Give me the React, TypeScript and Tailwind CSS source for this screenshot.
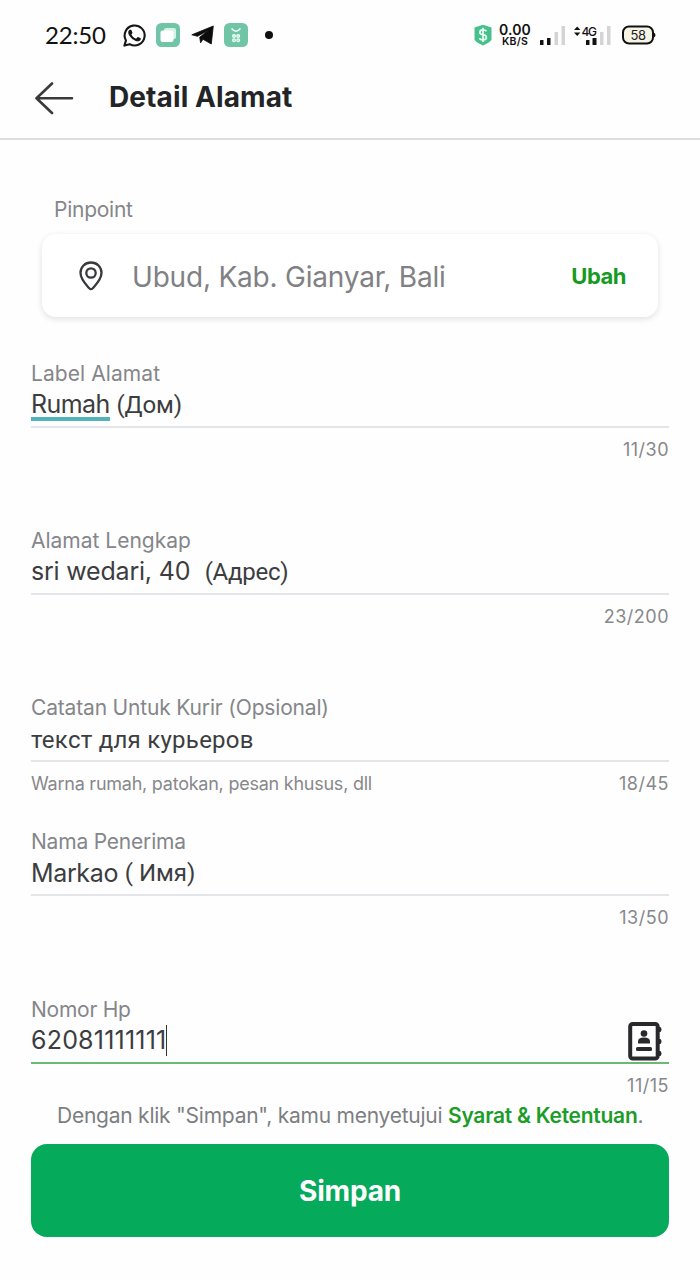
import React from "react";

type FieldProps = {
    label: string;
    labelClass?: string;
    count: string;
    helper?: string;
    active?: boolean;
    className: string;
    children: React.ReactNode;
};

function Field({ label, labelClass = "", count, helper, active, className, children }: FieldProps) {
    return (
        <div className={`relative flex flex-col ${className}`}>
            <label className="h-[30px] pt-px text-[21px] leading-[30px] text-[#85868a] whitespace-pre">
                <span className={labelClass}>{label}</span>
            </label>
            <div className="flex items-center h-8 text-[25px] leading-8 text-[#3c3d40] whitespace-pre">{children}</div>
            <div className={`mt-1.5 h-[2px] shrink-0 ${active ? "bg-[#6cb877]" : "bg-[#e3e5e9]"}`} />
            <div className="mt-2 flex justify-between h-7 text-[18px] leading-7 text-[#87888c]">
                <span className="tracking-[-0.24px]">{helper}</span>
                <span className="tracking-[0.5px]">{count}</span>
            </div>
        </div>
    );
}

function StatusBar() {
    return (
        <div className="h-[68px] flex items-start justify-between pl-[45px] pr-[44px] text-[#111]">
            <div className="h-[70px] flex items-center">
                <span className="w-[62px] font-['Lato'] text-[24px] tracking-[-0.2px] whitespace-nowrap">22:50</span>
                {/* WhatsApp */}
                <svg className="ml-[15px]" width="25" height="25" viewBox="0 0 24 24" fill="#161616">
                    <path d="M17.472 14.382c-.297-.149-1.758-.867-2.03-.967-.273-.099-.471-.148-.67.15-.197.297-.767.966-.94 1.164-.173.199-.347.223-.644.075-.297-.15-1.255-.463-2.39-1.475-.883-.788-1.48-1.761-1.653-2.059-.173-.297-.018-.458.13-.606.134-.133.298-.347.446-.52.149-.174.198-.298.298-.497.099-.198.05-.371-.025-.52-.075-.149-.669-1.612-.916-2.207-.242-.579-.487-.5-.669-.51-.173-.008-.371-.01-.57-.01-.198 0-.52.074-.792.372-.272.297-1.04 1.016-1.04 2.479 0 1.462 1.065 2.875 1.213 3.074.149.198 2.096 3.2 5.077 4.487.709.306 1.262.489 1.694.625.712.227 1.36.195 1.871.118.571-.085 1.758-.719 2.006-1.413.248-.694.248-1.289.173-1.413-.074-.124-.272-.198-.57-.347z" />
                    <path d="M2.300 21.700l1.500-5A9.600 9.600 0 1 1 7.400 20.300z" fill="none" stroke="#161616" strokeWidth="2" strokeLinejoin="round" />
                </svg>
                <svg className="ml-[9px]" width="24" height="24" viewBox="0 0 24 24">
                    <rect width="24" height="24" rx="5.500" fill="#70c5a6" />
                    <rect x="8" y="5" width="12" height="11" rx="2" fill="#d5f3e8" />
                    <rect x="4.500" y="7.500" width="13" height="11.500" rx="2" fill="#fff" />
                </svg>
                <svg className="ml-[11px]" width="23" height="20" viewBox="0 0 23 20" fill="#0c0c0c">
                    <path d="M22.300 1 20.300 19 12 14.300 9.600 17.800 8.700 12.200 17 5.500 6.500 11.300 .8 9.800Z" stroke="#0c0c0c" strokeWidth=".8" strokeLinejoin="round" />
                </svg>
                <svg className="ml-[10px]" width="24" height="24" viewBox="0 0 24 24">
                    <rect width="24" height="24" rx="5.500" fill="#70c5a6" />
                    <path d="M7.500 5.500Q12 11 16.500 5.500" fill="none" stroke="#effff9" strokeWidth="1.500" />
                    <g fill="none" stroke="#effff9" strokeWidth="1.400">
                        <circle cx="10" cy="13" r="1.300" />
                        <circle cx="14.200" cy="13" r="1.300" />
                        <circle cx="10" cy="17.200" r="1.300" />
                        <circle cx="14.200" cy="17.200" r="1.300" />
                    </g>
                </svg>
                <span className="ml-[17px] size-2 rounded-full bg-[#111]" />
            </div>

            <div className="h-[70px] flex items-center">
                <svg width="20" height="22" viewBox="0 0 20 22">
                    <path d="M1.500 3.500 10 .8 18.500 3.500V15.500Q18 18 10 21.500Q2 18 1.500 15.500Z" fill="#48c08c" />
                    <path d="M13.500 7.300Q12.500 5.800 10 5.800 6.800 5.800 6.800 8.200 6.800 10.300 10 10.700 13.400 11.200 13.400 13.500 13.400 15.900 10 15.900 7.300 15.900 6.300 14.200M10 3.800V18" fill="none" stroke="#eafff6" strokeWidth="1.700" />
                </svg>
                <div className="ml-[6px] w-[32px] flex flex-col items-center font-['Inter'] font-semibold">
                    <span className="text-[14px] leading-[13px] tracking-[0.1px]">0.00</span>
                    <span className="text-[10.5px] leading-[11px] tracking-[0.2px]">KB/S</span>
                </div>
                <svg className="ml-[9px]" width="26" height="22" viewBox="0 0 26 22">
                    <rect x="0" y="16" width="3.500" height="5" rx=".5" fill="#111" />
                    <rect x="7" y="14" width="3.500" height="7" rx=".5" fill="#111" />
                    <rect x="14.500" y="8" width="3.500" height="13" fill="#d4d4d6" />
                    <rect x="21.500" y="2" width="3.500" height="19" fill="#d4d4d6" />
                </svg>
                <svg className="ml-[8px]" width="38" height="22" viewBox="0 0 38 22">
                    <path d="M0 6 3.200 2.500 6.400 6ZM0 8.500 3.200 12 6.400 8.500Z" fill="#111" />
                    <text x="7.500" y="11.500" fontFamily="Inter" fontSize="12" fontWeight="500" textLength="15.500" fill="#111">4G</text>
                    <rect x="12" y="16" width="3.500" height="5" rx=".5" fill="#111" />
                    <rect x="18.500" y="14" width="4" height="7" rx=".5" fill="#111" />
                    <rect x="26" y="8" width="3.500" height="13" fill="#d4d4d6" />
                    <rect x="33" y="2" width="3.500" height="19" fill="#d4d4d6" />
                </svg>
                <svg className="ml-[10px]" width="34" height="20" viewBox="0 0 34 20">
                    <rect x="1" y="1.500" width="30" height="17" rx="6" fill="#f6f4e7" stroke="#111" strokeWidth="2" />
                    <path d="M31.500 7.500Q33.500 8 33.500 10T31.500 12.500Z" fill="#111" />
                    <text x="8.500" y="14.700" fontFamily="Inter" fontSize="13" textLength="15.500" fill="#222">58</text>
                </svg>
            </div>
        </div>
    );
}

export default function App() {
    return (
        <div className="w-[700px] h-[1280px] overflow-hidden bg-[#fefefe] font-['Inter','Roboto',sans-serif] flex flex-col">
            <StatusBar />

            {/* Header */}
            <header className="h-[72px] shrink-0 flex items-start pl-[35px] border-b-2 border-[#dcdcde]">
                <svg className="mt-[14px]" width="39" height="33" viewBox="0 0 39 33" fill="none" stroke="#3a3a3c" strokeWidth="2.600" strokeLinecap="round" strokeLinejoin="round">
                    <path d="M37 16.300H1.500M17 1.500 1.500 16.300 17 31" />
                </svg>
                <h1 className="ml-[35px] mt-[11px] text-[28px] leading-9 font-bold text-[#232427] tracking-[0.1px]">Detail Alamat</h1>
            </header>

            {/* Pinpoint */}
            <section className="mt-[54px] px-[42px] shrink-0">
                <div className="pl-[12px] pt-px h-[30px] text-[21px] leading-[30px] text-[#85868a] tracking-[-0.25px]">Pinpoint</div>
                <div className="mt-[10px] h-[83px] rounded-[14px] bg-white shadow-[0_2px_6px_rgba(0,0,0,0.12)] flex items-center pl-[37px] pr-[32px]">
                    <svg width="24" height="30" viewBox="0 0 24 30" fill="none" stroke="#38393b" strokeWidth="2.300">
                        <path d="M12 1.500C6 1.500 1.500 6 1.500 11.800 1.500 18.500 7 23.500 10.300 27.300Q12 29 13.700 27.300C17 23.500 22.500 18.500 22.500 11.800 22.500 6 18 1.500 12 1.500Z" />
                        <circle cx="12" cy="12" r="4.700" />
                    </svg>
                    <span className="ml-[29px] pt-[2px] text-[28px] leading-9 text-[#808184] tracking-[-0.2px]">Ubud, Kab. Gianyar, Bali</span>
                    <span className="ml-auto pt-[2px] text-[22px] font-bold text-[#169a1f] tracking-[-0.5px]">Ubah</span>
                </div>
            </section>

            <main className="mt-[41px] px-[31px] shrink-0">
                <Field className="h-[167px]" label="Label Alamat" labelClass="tracking-[0.08px]" count="11/30">
                    <span className="relative tracking-[-0.6px]">
                        Rumah
                        <span className="absolute left-0 right-0 -bottom-px h-[4px] bg-[#52b3b8]" />
                    </span>
                    <span className="pt-[2px] pl-px font-['Roboto'] text-[24px] tracking-[-0.1px]"> (Дом)</span>
                </Field>
                <Field className="h-[167px]" label="Alamat Lengkap" count="23/200">
                    <span className="tracking-[-0.2px]">sri wedari, 40</span>
                    <span className="pt-[2px] pl-[3px] font-['Roboto'] text-[24px] tracking-[-0.25px]">  (Адрес)</span>
                </Field>
                <Field className="h-[134px]" label="Catatan Untuk Kurir (Opsional)" labelClass="tracking-[-0.17px]" count="18/45" helper="Warna rumah, patokan, pesan khusus, dll">
                    <span className="pt-[3px] font-['Roboto'] text-[24px] tracking-[0.26px]">текст для курьеров</span>
                </Field>
                <Field className="h-[168px]" label="Nama Penerima" labelClass="tracking-[-0.2px]" count="13/50">
                    <span className="pt-px tracking-[-0.35px]">Markao </span>
                    <span className="pt-[2px] font-['Roboto'] text-[24px]">( Имя)</span>
                </Field>
                <Field className="h-[106px]" label="Nomor Hp" labelClass="tracking-[-0.25px]" count="11/15" active>
                    <span className="tracking-[0.2px]">62081111111</span>
                    <span className="w-px h-[31px] bg-[#333]" />
                    <svg className="absolute right-[5px] top-[27px]" width="37" height="41" viewBox="0 0 37 41">
                        <path d="M30 6H33.500Q35.500 8.500 33.500 11H30ZM30 18H33.500Q35.500 20.500 33.500 23H30ZM30 30H33.500Q35.500 32.500 33.500 35H30Z" fill="#29292b" />
                        <rect x="3.200" y="3" width="27.500" height="34.500" rx="2.500" fill="#fefefe" stroke="#29292b" strokeWidth="4" />
                        <circle cx="17" cy="12.500" r="3.300" fill="#29292b" />
                        <path d="M11 22.500V20.500Q11 16.500 17 16.500T23 20.500V22.500Z" fill="#29292b" />
                        <rect x="9" y="26" width="16" height="4" rx="1.500" fill="#29292b" />
                    </svg>
                </Field>
            </main>

            <footer className="px-[31px]">
                <p className="h-[30px] pt-px pl-[26px] text-[21px] leading-[30px] text-[#7d7e82] whitespace-nowrap">
                    <span className="tracking-[-0.24px]">Dengan klik "Simpan", kamu menyetujui </span>
                    <span className="font-semibold text-[#1c9c28] tracking-[-0.25px]">Syarat &amp; Ketentuan</span>.
                </p>
                <button className="mt-[14px] w-full h-[93px] rounded-[16px] bg-[#05aa5b] text-white text-[28px] font-bold tracking-[-0.2px]">
                    Simpan
                </button>
            </footer>
        </div>
    );
}
